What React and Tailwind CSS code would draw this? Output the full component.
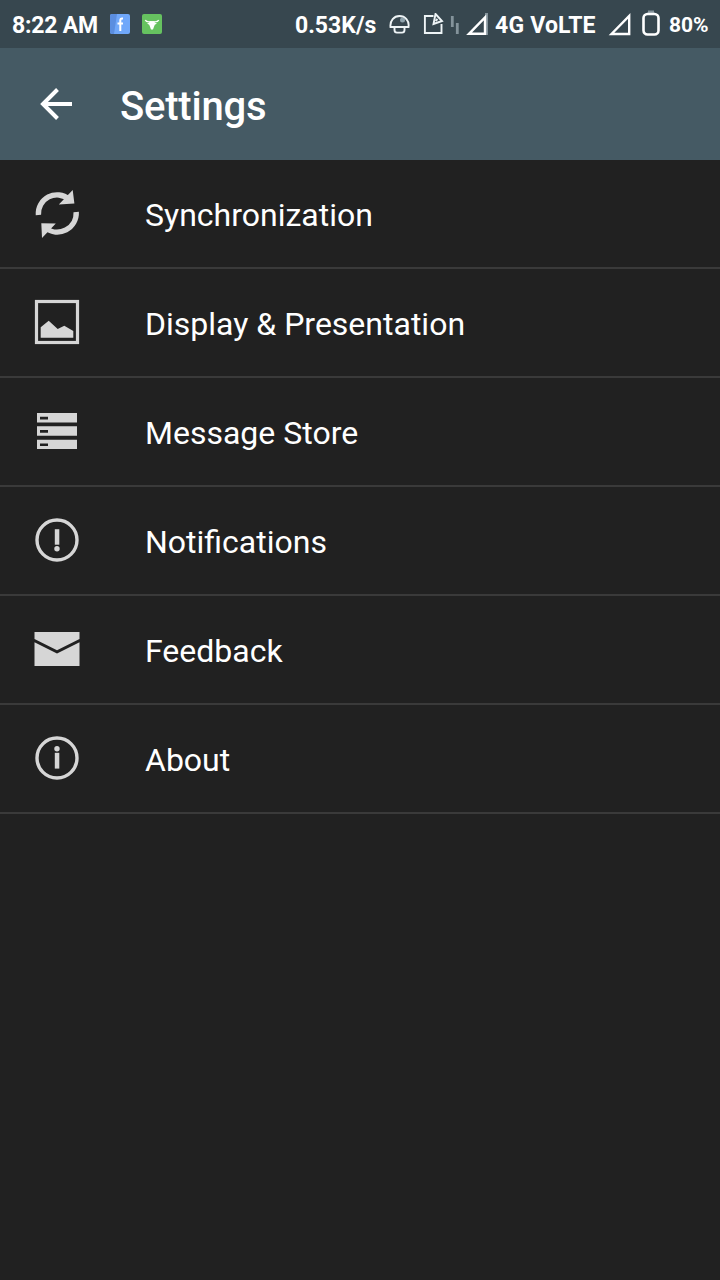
import React from 'react';

const SyncIcon = () => (
    <>
        <path d="M6.4 26A18.7 18.7 0 0 1 37 10.2M44.2 23A19 19 0 0 1 13.5 39" fill="none" stroke="currentColor" strokeWidth="5.4" />
        <path d="M40.7 1l1.7 13.4-15.6 1zM9.3 34.2l14.5.3L10 49z" />
    </>
);

const DisplayIcon = () => (
    <>
        <rect x="4.5" y="3.5" width="41" height="41" fill="none" stroke="currentColor" strokeWidth="3.2" />
        <path d="M8.7 39.8V29.3l8-6.6 9 8.4 6.6-3.4 9 5.3v6.8z" />
    </>
);

const StoreIcon = () => (
    <path
        fillRule="evenodd"
        d="M5 6h40v9.4H5zM8 9.8v2.6h8V9.8zM5 19.3h40v9.4H5zM8 23.1v2.6h8v-2.6zM5 32.7h40V42H5zM8 36.4V39h8v-2.6z"
    />
);

const AlertIcon = () => (
    <>
        <circle cx="25" cy="24" r="20" fill="none" stroke="currentColor" strokeWidth="3.4" />
        <path d="M22.8 13.2h4.5v15.5h-4.5z" />
        <circle cx="25" cy="32.7" r="2.7" />
    </>
);

const MailIcon = () => (
    <path d="M2.5 7h45v7L25 25.3 2.5 14zM2.5 17.3L25 28.6l22.5-11.3V41h-45z" />
);

const AboutIcon = () => (
    <>
        <circle cx="25" cy="24" r="20" fill="none" stroke="currentColor" strokeWidth="3.4" />
        <circle cx="25" cy="14.8" r="2.7" />
        <path d="M22.8 18.8h4.5v15.8h-4.5z" />
    </>
);

const ITEMS = [
    { label: 'Synchronization', Icon: SyncIcon },
    { label: 'Display & Presentation', Icon: DisplayIcon },
    { label: 'Message Store', Icon: StoreIcon },
    { label: 'Notifications', Icon: AlertIcon },
    { label: 'Feedback', Icon: MailIcon },
    { label: 'About', Icon: AboutIcon },
];

const StatusBar = () => (
    <div className="flex h-12 items-center bg-[#37474f] pl-3 text-[23px] font-bold leading-none whitespace-nowrap">
        <span className="w-[98px] shrink-0 pt-0.5 tracking-[-0.2px]">8:22 AM</span>
        <svg viewBox="0 0 20 20" className="h-5 w-5 shrink-0">
            <rect width="20" height="20" rx="2" fill="#70a8fa" />
            <path d="M2 0h5L4 20H2a2 2 0 0 1-2-2V2a2 2 0 0 1 2-2z" fill="#5b8ee0" />
            <path d="M13 4.5h-1c-1.3 0-1.7.8-1.7 2V17M7.5 9.5H13" fill="none" stroke="#fff" strokeWidth="2" />
        </svg>
        <svg viewBox="0 0 20 20" className="ml-3 h-5 w-5 shrink-0">
            <rect width="20" height="20" rx="2" fill="#66c260" />
            <path d="M3.3 6c.7 1.7 2.7 2 4.7 1.8h4c2 .2 4-.1 4.7-1.8" fill="none" stroke="#fff" strokeWidth="1.3" />
            <path d="M7.5 7.2h5l.3 1.6 2.2.6-2.2 1.3-.9 2.3L11 15.5H9L8.100 13l-.9-2.300L5 9.400l2.200-.6z" fill="#fff" />
        </svg>
        <span className="ml-[133px] w-[94px] shrink-0 pt-0.5">0.53K/s</span>
        <svg viewBox="0 0 22 22" className="h-[22px] w-[22px] shrink-0 fill-none stroke-[#eef4f6]" strokeWidth="1.9">
            <path d="M1.5 14C.8 7.5 5 3 10.500 3s10 4.500 9 11z" />
            <path d="M5.500 14v3c0 2 1 2.600 2.500 2.600h5c1.500 0 2.500-.6 2.500-2.600v-3" />
            <circle cx="13.5" cy="7" r="2.5" fill="#90a4ae" stroke="none" />
        </svg>
        <svg viewBox="0 0 22 22" className="ml-3 h-[22px] w-[22px] shrink-0 fill-none stroke-[#eef4f6]" strokeWidth="1.9">
            <path d="M10.5 3H1.9v17h16.600v-9" />
            <path d="M12.5 1l6.500 7-8.500 3z" />
            <path d="M12.5 8l2-2" />
        </svg>
        <svg viewBox="0 0 10 20" className="ml-[5px] h-5 w-[10px] shrink-0 stroke-[#84939b]" strokeWidth="2.8">
            <path d="M2.300 2v11M7.300 9v11" />
        </svg>
        <svg viewBox="0 0 24 24" className="ml-[5px] h-6 w-6 shrink-0 fill-none stroke-white" strokeWidth="2.4">
            <path d="M21.500 1v22" stroke="#84939b" strokeWidth="3" />
            <path d="M20 5.500v16.300H4z" />
        </svg>
        <span className="ml-[6px] w-[112px] shrink-0 pt-0.5 tracking-[0.2px]">4G VoLTE</span>
        <svg viewBox="0 0 24 24" className="h-6 w-6 shrink-0 fill-none stroke-white" strokeWidth="2.4">
            <path d="M22.200 4v18H4.500z" />
        </svg>
        <svg viewBox="0 0 20 28" className="ml-[10px] mb-0.5 h-7 w-5 shrink-0">
            <path d="M3 6l4-2.500V1.500h6v2L17 6z" fill="#84939b" />
            <rect x="2.5" y="5" width="15" height="20.5" rx="4" fill="none" stroke="#fff" strokeWidth="2.6" />
        </svg>
        <span className="ml-2 pt-0.5 text-[21px]">80%</span>
    </div>
);

const SettingsRow = ({ label, Icon }) => (
    <li className="flex h-[109px] items-center border-b-2 border-[#3a3a3a] pl-8">
        <svg viewBox="0 0 50 50" className="h-[50px] w-[50px] shrink-0 fill-current text-[#d6d6d6]">
            <Icon />
        </svg>
        <span className="ml-[63px] pt-[3px] text-[32px] leading-none">{label}</span>
    </li>
);

const App = () => (
    <div className="min-h-screen bg-[#212121] text-white" style={{ fontFamily: 'Roboto, sans-serif' }}>
        <StatusBar />

        {/* Toolbar */}
        <header className="flex h-28 items-center bg-[#455a64] pl-10">
            <svg viewBox="0 0 32 32" className="h-8 w-8 shrink-0 fill-none stroke-white" strokeWidth="4">
                <path d="M32 16H4M17.5 1.5L3 16l14.5 14.5" />
            </svg>
            <h1 className="ml-12 pt-1.5 text-[40px] font-medium leading-none tracking-[-0.2px]">Settings</h1>
        </header>

        <ul>
            {ITEMS.map(item => (
                <SettingsRow key={item.label} label={item.label} Icon={item.Icon} />
            ))}
        </ul>
    </div>
);

export default App;
